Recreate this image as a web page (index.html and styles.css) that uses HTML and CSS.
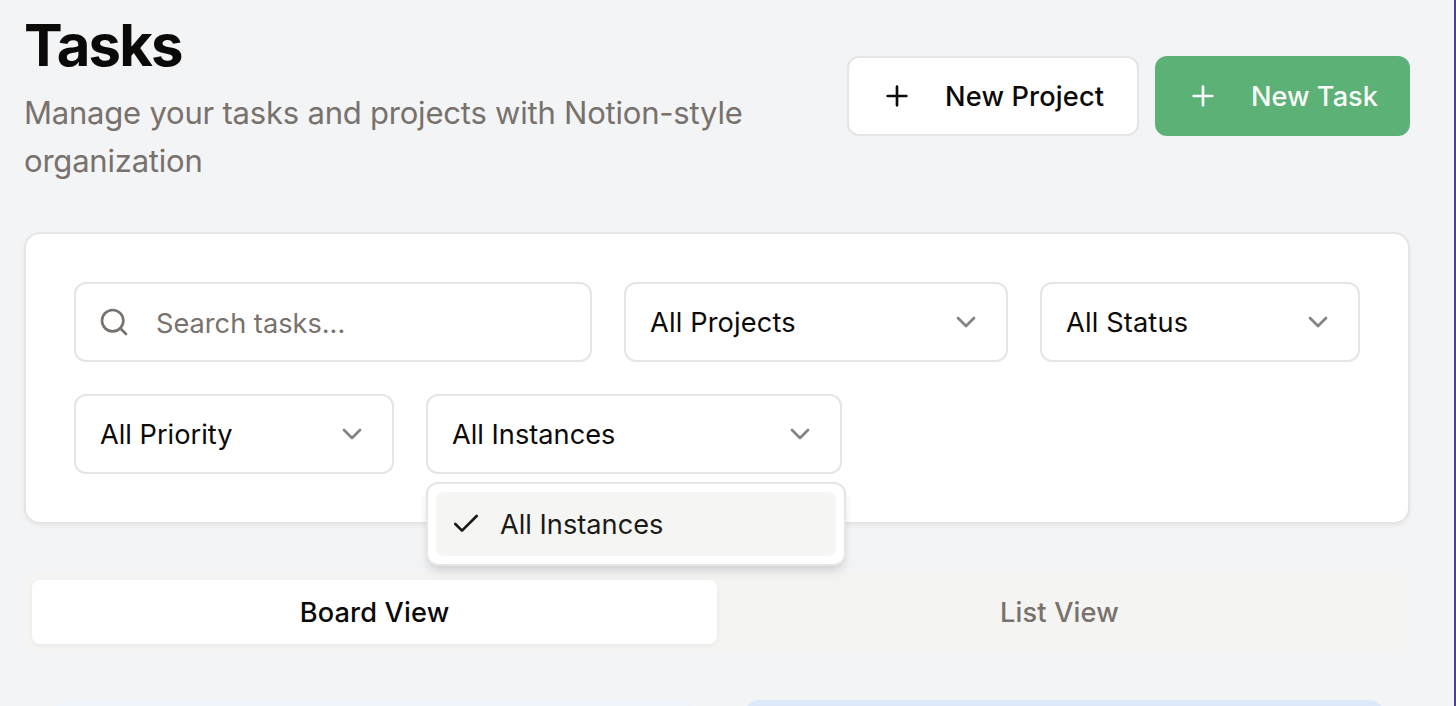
FILE: index.html
```
<!DOCTYPE html>
<html lang="en">
<head>
<meta charset="utf-8">
<title>Tasks</title>
<link rel="stylesheet" href="styles.css">
</head>
<body>
<main class="page">
  <header class="header">
    <div class="intro">
      <h1 class="title">Tasks</h1>
      <p class="subtitle">Manage your tasks and projects with Notion-style organization</p>
    </div>
    <div class="actions">
      <button class="btn">
        <svg class="icon" viewBox="0 0 24 24"><path d="M5 12h14M12 5v14"/></svg>
        <span class="label wide">New Project</span>
      </button>
      <button class="btn btn-primary">
        <svg class="icon" viewBox="0 0 24 24"><path d="M5 12h14M12 5v14"/></svg>
        <span class="label">New Task</span>
      </button>
    </div>
  </header>

  <section class="filters">
    <div class="field search">
      <svg class="icon" viewBox="0 0 24 24"><circle cx="11" cy="11" r="8"/><path d="m21 21-4.3-4.3"/></svg>
      <span class="placeholder">Search tasks...</span>
    </div>
    <div class="field projects">
      <span class="label wide">All Projects</span>
      <svg class="icon chevron" viewBox="0 0 24 24"><path d="m6 9 6 6 6-6"/></svg>
    </div>
    <div class="field status">
      <span class="label wide">All Status</span>
      <svg class="icon chevron" viewBox="0 0 24 24"><path d="m6 9 6 6 6-6"/></svg>
    </div>
    <div class="field priority">
      <span class="label">All Priority</span>
      <svg class="icon chevron" viewBox="0 0 24 24"><path d="m6 9 6 6 6-6"/></svg>
    </div>
    <div class="field instances">
      <span class="label">All Instances</span>
      <svg class="icon chevron" viewBox="0 0 24 24"><path d="m6 9 6 6 6-6"/></svg>
      <div class="menu">
        <div class="option">
          <svg class="icon" viewBox="0 0 24 24"><path d="M20 6 9 17l-5-5"/></svg>
          <span class="label">All Instances</span>
        </div>
      </div>
    </div>
  </section>

  <nav class="tabs">
    <div class="tab active"><span class="label wide">Board View</span></div>
    <div class="tab"><span class="label wide">List View</span></div>
  </nav>

  <section class="board">
    <div class="column"></div>
    <div class="column column-blue"></div>
  </section>
</main>
</body>
</html>
```
FILE: styles.css
```
* {
  box-sizing: border-box;
}

body {
  margin: 0;
  height: 706px;
  overflow: hidden;
  background: #f2f4f6;
  color: #0c0a09;
  font-family: Inter, "Liberation Sans", sans-serif;
  font-size: 27.2px;
  line-height: 40px;
}

.page {
  height: 706px;
  overflow: hidden;
  padding: 8px 44px 0 24px;
  border-right: 2px solid #4b3aa8;
  display: flex;
  flex-direction: column;
  gap: 48px;
}

.header {
  display: flex;
  align-items: center;
  justify-content: space-between;
  flex: none;
  height: 176px;
}

.intro {
  width: 760px;
  padding-top: 1px;
}

.title {
  margin: 0 0 8px;
  font-size: 58px;
  line-height: 72px;
  font-weight: 700;
  letter-spacing: -1.8px;
}

.subtitle {
  margin: 0;
  font-size: 31px;
  line-height: 48px;
  letter-spacing: -0.21px;
  color: #78716c;
}

.actions {
  display: flex;
  gap: 16px;
}

.btn {
  display: flex;
  align-items: center;
  gap: 32px;
  width: 292px;
  height: 80px;
  padding: 0 0 0 32px;
  border: 2px solid #e5e5e5;
  border-radius: 12px;
  background: #fff;
  color: #0c0a09;
  font: inherit;
  font-weight: 500;
  white-space: nowrap;
}

.btn-primary {
  width: 255px;
  border: 0;
  background: #5cb176;
  color: #fafaf9;
}

.label {
  padding-top: 1px;
}

.wide {
  letter-spacing: 0.15px;
}

.placeholder {
  padding-top: 3px;
}

.icon {
  width: 32px;
  height: 32px;
  flex: none;
  fill: none;
  stroke: currentColor;
  stroke-width: 2;
  stroke-linecap: round;
  stroke-linejoin: round;
}

.filters {
  display: flex;
  flex-wrap: wrap;
  gap: 32px;
  flex: none;
  padding: 48px;
  border: 2px solid #e7e5e4;
  border-radius: 16px;
  background: #fff;
  box-shadow: 0 2px 4px rgba(0, 0, 0, 0.05);
}

.field {
  position: relative;
  display: flex;
  align-items: center;
  justify-content: space-between;
  height: 80px;
  padding: 0 24px;
  border: 2px solid #e5e5e5;
  border-radius: 12px;
}

.search {
  flex: 1;
  justify-content: flex-start;
  gap: 26px;
  padding-left: 22px;
  color: #78716c;
}

.projects {
  width: 384px;
}

.status,
.priority {
  width: 320px;
}

.instances {
  width: 416px;
}

.chevron {
  opacity: 0.5;
}

.menu {
  position: absolute;
  top: 86px;
  left: -2px;
  width: 420px;
  padding: 8px;
  border: 2px solid #e7e5e4;
  border-radius: 12px;
  background: #fff;
  box-shadow: 0 8px 12px -2px rgba(0, 0, 0, 0.1), 0 4px 8px -4px rgba(0, 0, 0, 0.1);
}

.option {
  display: flex;
  align-items: center;
  gap: 18px;
  height: 64px;
  padding-left: 14px;
  border-radius: 8px;
  background: #f5f5f4;
  color: #1c1917;
}

.tabs {
  display: flex;
  flex: none;
  height: 80px;
  padding: 8px;
  border-radius: 12px;
  background: #f4f4f2;
}

.tab {
  flex: 1;
  display: flex;
  align-items: center;
  justify-content: center;
  border-radius: 8px;
  color: #78716c;
  font-weight: 500;
}

.active {
  background: #fff;
  color: #0c0a09;
  box-shadow: 0 2px 4px rgba(0, 0, 0, 0.05);
}

.board {
  display: grid;
  grid-template-columns: 1fr 1fr;
  gap: 48px;
  flex: none;
  height: 240px;
  padding: 0 25px 0 30px;
}

.column {
  border-radius: 16px;
  background: #eff4fa;
}

.column-blue {
  background: #dde8fb;
}
```
